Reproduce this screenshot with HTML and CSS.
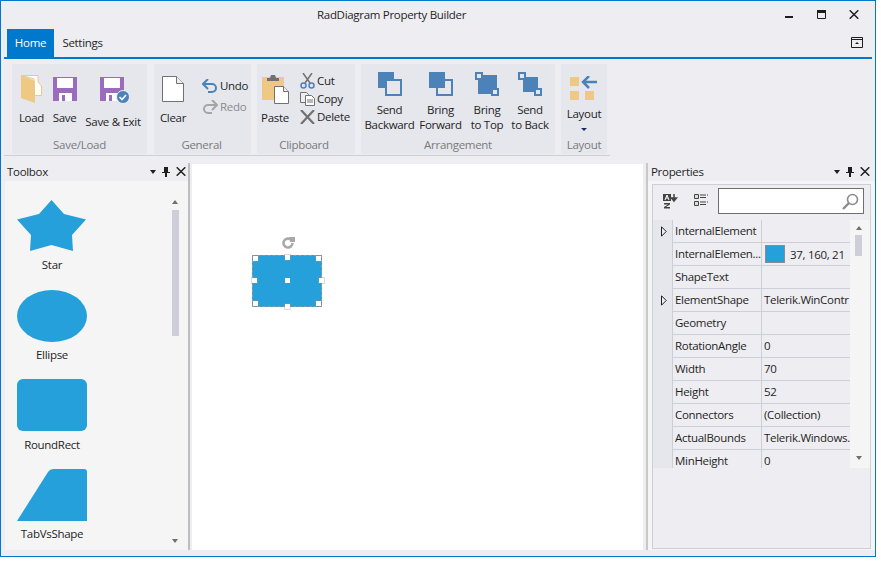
FILE: index.html
```html
<!DOCTYPE html>
<html lang="en">
<head>
<meta charset="utf-8">
<title>RadDiagram Property Builder</title>
<link rel="stylesheet" href="styles.css">
</head>
<body>
<div class="window">
  <header class="titlebar">
    <span class="title">RadDiagram Property Builder</span>
    <div class="winctrls">
      <svg width="9" height="9" viewBox="0 0 9 9"><rect x="0" y="6" width="8" height="2" fill="#1e1e1e"/></svg>
      <svg width="9" height="9" viewBox="0 0 9 9"><path d="M.5 .5h8v8h-8z" fill="none" stroke="#1e1e1e"/><rect width="9" height="3" fill="#1e1e1e"/></svg>
      <svg width="10" height="9" viewBox="0 0 10 9"><path d="M.7 .3l8.600 8.400M9.300 .3L.7 8.700" stroke="#1e1e1e" stroke-width="1.500"/></svg>
    </div>
  </header>
  <nav class="tabs">
    <span class="tab active">Home</span>
    <span class="tab">Settings</span>
    <svg class="collapse" width="12" height="11" viewBox="0 0 12 11"><path d="M.5 .5h11v10H.5z" fill="none" stroke="#1e1e1e"/><path d="M0 2.500h12" stroke="#1e1e1e"/><path d="M4 7l2-2 2 2z" fill="#1e1e1e"/></svg>
  </nav>
  <div class="ribbon">
    <section class="group g-save">
      <div class="group-body">
        <div class="btn w33">
          <svg class="ico" width="22" height="30" viewBox="0 0 22 30"><path d="M1 1.500H17V8L20.500 12V21.500H13V5z" fill="#fff" stroke="#efc884"/><path d="M0 1L14 7V29L0 24z" fill="#efc884"/></svg>
          <span class="lbl">Load</span>
        </div>
        <div class="btn w33">
          <svg class="ico" width="24" height="30" viewBox="0 0 24 30"><path d="M0 3h24v24H0z" fill="#9b6bbd"/><path d="M4 4h16v10H4z" fill="#fff"/><path d="M6 19h13v8H6z" fill="#fff"/><path d="M9 21h3v6H9z" fill="#9b6bbd"/></svg>
          <span class="lbl">Save</span>
        </div>
        <div class="btn w62">
          <svg class="ico ico-exit" width="30" height="30" viewBox="0 0 30 30"><path d="M0 3h24v24H0z" fill="#9b6bbd"/><path d="M4 4h16v10H4z" fill="#fff"/><path d="M6 19h13v8H6z" fill="#fff"/><path d="M9 21h3v6H9z" fill="#9b6bbd"/><circle cx="23" cy="23" r="6.500" fill="#4d82b8" stroke="#eeeef2"/><path d="M19.500 23l2.500 2.500 4-4.500" fill="none" stroke="#fff" stroke-width="1.600"/></svg>
          <span class="lbl low">Save &amp; Exit</span>
        </div>
      </div>
      <div class="group-name">Save/Load</div>
    </section>
    <section class="group g-general">
      <div class="group-body">
        <div class="btn w36">
          <svg class="ico" width="22" height="30" viewBox="0 0 22 30"><path d="M.5 2.500h14l7 7v18H.5z" fill="#fff" stroke="#717171"/><path d="M14.500 2.500v7h7" fill="#eee" stroke="#717171"/></svg>
          <span class="lbl">Clear</span>
        </div>
        <div class="small-stack s-general">
          <div class="small"><svg width="16" height="14" viewBox="0 0 16 14"><path d="M1 5h9a4 4 0 0 1 0 8H6" fill="none" stroke="#4d82b8" stroke-width="2"/><path d="M6 0L1 5l5 5" fill="none" stroke="#4d82b8" stroke-width="2"/></svg><span>Undo</span></div>
          <div class="small off"><svg width="16" height="14" viewBox="0 0 16 14"><path d="M15 5H6a4 4 0 0 0 0 8h4" fill="none" stroke="#a5a5a5" stroke-width="2"/><path d="M10 0l5 5-5 5" fill="none" stroke="#a5a5a5" stroke-width="2"/></svg><span>Redo</span></div>
        </div>
      </div>
      <div class="group-name">General</div>
    </section>
    <section class="group g-clip">
      <div class="group-body">
        <div class="btn w36">
          <svg class="ico" width="27" height="30" viewBox="0 0 27 30"><path d="M0 3h22v23H0z" fill="#efc884"/><path d="M5 4h3l1-3h4l1 3h3v3H5z" fill="#717171"/><path d="M12.500 12.500h9l5 5v12h-14z" fill="#fff" stroke="#717171"/><path d="M21.500 12.500v5h5" fill="#eee" stroke="#717171"/></svg>
          <span class="lbl">Paste</span>
        </div>
        <div class="small-stack s-clip">
          <div class="small"><svg width="15" height="16" viewBox="0 0 15 16"><path d="M3 0l7 10M12 0L5 10" stroke="#717171" stroke-width="1.500"/><circle cx="3.500" cy="12.500" r="2.500" fill="none" stroke="#4d82b8" stroke-width="1.500"/><circle cx="11.500" cy="12.500" r="2.500" fill="none" stroke="#4d82b8" stroke-width="1.500"/></svg><span>Cut</span></div>
          <div class="small"><svg width="15" height="14" viewBox="0 0 15 14"><path d="M.5 .5h6l2 2v8H.5z" fill="#eee" stroke="#717171"/><path d="M5.500 3.500h6l3 3v7h-9z" fill="#fff" stroke="#717171"/><path d="M7 8h6M7 10h6" stroke="#717171"/></svg><span>Copy</span></div>
          <div class="small"><svg width="15" height="14" viewBox="0 0 15 14"><path d="M1 0l13 14M14 0L1 14" stroke="#717171" stroke-width="2.200"/></svg><span>Delete</span></div>
        </div>
      </div>
      <div class="group-name">Clipboard</div>
    </section>
    <section class="group g-arr">
      <div class="group-body arr-body">
        <div class="btn w51">
          <svg class="ico" width="24" height="24" viewBox="0 0 24 24"><path d="M0 0h16v16H0z" fill="#4d82b8"/><path d="M8 8h15v15H8z" fill="#e6e7ed" stroke="#4d82b8" stroke-width="2"/></svg>
          <span class="lbl two">Send<br>Backward</span>
        </div>
        <div class="btn w51">
          <svg class="ico" width="24" height="24" viewBox="0 0 24 24"><path d="M8 8h15v15H8z" fill="none" stroke="#4d82b8" stroke-width="2"/><path d="M0 0h16v16H0z" fill="#4d82b8"/></svg>
          <span class="lbl two">Bring<br>Forward</span>
        </div>
        <div class="btn w44">
          <svg class="ico" width="24" height="24" viewBox="0 0 24 24"><path d="M3 3h19v19H3z" fill="#4d82b8"/><path d="M1 1h6v6H1zM17 17h6v6h-6z" fill="#e6e7ed" stroke="#4d82b8" stroke-width="2"/></svg>
          <span class="lbl two">Bring<br>to Top</span>
        </div>
        <div class="btn w42">
          <svg class="ico" width="24" height="24" viewBox="0 0 24 24"><path d="M5 5h15v15H5z" fill="#4d82b8"/><path d="M1 1h6v6H1zM17 17h6v6h-6z" fill="#e6e7ed" stroke="#4d82b8" stroke-width="2"/></svg>
          <span class="lbl two">Send<br>to Back</span>
        </div>
      </div>
      <div class="group-name">Arrangement</div>
    </section>
    <section class="group g-layout">
      <div class="group-body">
        <div class="btn w46 btn-layout">
          <svg class="ico" width="28" height="24" viewBox="0 0 28 24"><path d="M0 1h9v9H0zM0 15h9v9H0zM15 15h9v9h-9z" fill="#efc884"/><path d="M27 6H13M19 0l-6 6 6 6" fill="none" stroke="#4d82b8" stroke-width="2.500"/></svg>
          <span class="lbl">Layout</span>
          <i class="caret"></i>
        </div>
      </div>
      <div class="group-name">Layout</div>
    </section>
  </div>
  <main class="dock">
    <aside class="toolbox">
      <div class="pane-head"><span>Toolbox</span>
        <div class="pane-ctrls">
          <i class="tri"></i>
          <svg width="8" height="10" viewBox="0 0 8 10"><path d="M2 0h4v5h2v1H5v4H3V6H0V5h2z" fill="#1e1e1e"/></svg>
          <svg width="10" height="9" viewBox="0 0 10 9"><path d="M.7 .3l8.600 8.400M9.300 .3L.7 8.700" stroke="#1e1e1e" stroke-width="1.500"/></svg>
        </div>
      </div>
      <div class="toolbox-body">
        <div class="shapes">
          <figure class="shape"><svg width="70" height="52" viewBox="0 0 70 52"><path d="M34.500 0L47 14 69 19.500 55 35 56 51 34.500 45 13 51 14 35 0 19.500 22 14z" fill="#25a0da"/></svg><figcaption>Star</figcaption></figure>
          <figure class="shape"><svg width="70" height="52" viewBox="0 0 70 52"><ellipse cx="35" cy="26" rx="35" ry="26" fill="#25a0da"/></svg><figcaption>Ellipse</figcaption></figure>
          <figure class="shape"><svg width="70" height="52" viewBox="0 0 70 52"><rect width="70" height="52" rx="6" fill="#25a0da"/></svg><figcaption>RoundRect</figcaption></figure>
          <figure class="shape"><svg width="70" height="52" viewBox="0 0 70 52"><path d="M0 52L31 3Q33 0 37 0H67Q70 0 70 3V52z" fill="#25a0da"/></svg><figcaption>TabVsShape</figcaption></figure>
        </div>
        <div class="vscroll">
          <i class="up"></i><b class="thumb"></b><i class="down"></i>
        </div>
      </div>
    </aside>
    <div class="splitter"></div>
    <section class="canvas">
      <svg class="rotate" width="13" height="12" viewBox="0 0 13 12"><path d="M10.500 6a4.500 4.500 0 1 1-2-3.700" fill="none" stroke="#a8a8a8" stroke-width="2.500"/><path d="M7 0h6v5H8z" fill="#a8a8a8"/></svg>
      <div class="node">
        <i class="h tl"></i><i class="h tc"></i><i class="h tr"></i>
        <i class="h ml"></i><i class="h mc"></i><i class="h mr"></i>
        <i class="h bl"></i><i class="h bc"></i><i class="h br"></i>
      </div>
    </section>
    <div class="splitter2"></div>
    <aside class="props">
      <div class="pane-head phead"><span>Properties</span>
        <div class="pane-ctrls">
          <i class="tri"></i>
          <svg width="8" height="10" viewBox="0 0 8 10"><path d="M2 0h4v5h2v1H5v4H3V6H0V5h2z" fill="#1e1e1e"/></svg>
          <svg width="10" height="9" viewBox="0 0 10 9"><path d="M.7 .3l8.600 8.400M9.300 .3L.7 8.700" stroke="#1e1e1e" stroke-width="1.500"/></svg>
        </div>
      </div>
      <div class="props-body">
        <div class="props-frame">
          <div class="props-tools">
            <svg width="15" height="15" viewBox="0 0 15 15"><rect x="0" y="0" width="8" height="7" fill="#444"/><path d="M2 6l2-5 2 5M3 4h2" fill="none" stroke="#fff"/><path d="M1 9h6v1.500L3 13h4v1.500H1V13l4-2.500H1z" fill="#444"/><path d="M11 0v6M8.500 4l2.500 3 2.500-3z" stroke="#444" fill="#444" stroke-width="1.500"/></svg>
            <svg width="14" height="12" viewBox="0 0 14 12"><path d="M.5 .5h4v4h-4zM.5 7.500h4v4h-4z" fill="#ddd" stroke="#444"/><path d="M6 1h6M6 3.500h6M6 8h6M6 10.500h6M13 1h1M13 8h1" stroke="#444"/></svg>
            <div class="search"><svg width="17" height="17" viewBox="0 0 17 17"><circle cx="10.500" cy="6.500" r="5" fill="none" stroke="#8c8c8c" stroke-width="1.600"/><path d="M7 10l-6 6" stroke="#8c8c8c" stroke-width="2.400"/></svg></div>
          </div>
          <div class="grid-wrap">
            <div class="grid">
              <div class="row"><span class="gut"><svg width="6" height="11" viewBox="0 0 6 11"><path d="M.5 .8L5.200 5.500.5 10.200z" fill="#eeeef2" stroke="#1e1e1e"/></svg></span><span class="k">InternalElement</span><span class="v"></span></div>
              <div class="row"><span class="gut"></span><span class="k">InternalElemen...</span><span class="v color"><i class="swatch"></i>37, 160, 21</span></div>
              <div class="row"><span class="gut"></span><span class="k">ShapeText</span><span class="v"></span></div>
              <div class="row"><span class="gut"><svg width="6" height="11" viewBox="0 0 6 11"><path d="M.5 .8L5.200 5.500.5 10.200z" fill="#eeeef2" stroke="#1e1e1e"/></svg></span><span class="k">ElementShape</span><span class="v">Telerik.WinContr</span></div>
              <div class="row"><span class="gut"></span><span class="k">Geometry</span><span class="v"></span></div>
              <div class="row"><span class="gut"></span><span class="k">RotationAngle</span><span class="v">0</span></div>
              <div class="row"><span class="gut"></span><span class="k">Width</span><span class="v">70</span></div>
              <div class="row"><span class="gut"></span><span class="k">Height</span><span class="v">52</span></div>
              <div class="row"><span class="gut"></span><span class="k">Connectors</span><span class="v">(Collection)</span></div>
              <div class="row"><span class="gut"></span><span class="k">ActualBounds</span><span class="v">Telerik.Windows.</span></div>
              <div class="row"><span class="gut"></span><span class="k">MinHeight</span><span class="v">0</span></div>
            </div>
            <div class="vscroll vs2">
              <i class="up"></i><b class="thumb"></b><i class="down"></i>
            </div>
          </div>
        </div>
      </div>
    </aside>
  </main>
</div>
</body>
</html>
```

FILE: styles.css
```css
* { box-sizing: border-box; }
html, body { margin: 0; padding: 0; background: #fff; }
body { font: 11.5px/16px "Open Sans", "Noto Sans", sans-serif; color: #1e1e1e; letter-spacing: -0.3px; }
figure { margin: 0; }
i { display: block; }

.window {
  width: 876px; height: 557px;
  border: 1px solid #0078cc;
  background: #eeeef2;
  display: flex; flex-direction: column;
  overflow: hidden;
}

.titlebar { height: 28px; display: flex; align-items: center; padding-left: 316px; flex: none; }
.winctrls { margin-left: auto; margin-right: 16px; display: flex; gap: 23px; margin-bottom: 2px; }

.tabs { height: 30px; margin: 0 3px; border-bottom: 2px solid #0078cc; display: flex; align-items: stretch; padding-left: 3px; flex: none; }
.tab { width: 47px; height: 28px; line-height: 27px; text-align: center; }
.tab + .tab { width: 57px; }
.tab.active { background: #0078cc; color: #fff; }
.collapse { margin-left: auto; margin-right: 9px; margin-top: 8px; }

.ribbon {
  width: 606px; height: 92px; margin: 5px 0 0 3px; padding: 0 0 0 8px;
  border-bottom: 1px solid #ccced8;
  display: flex; gap: 6px; flex: none;
}
.group { background: #e6e7ed; height: 90px; display: flex; flex-direction: column; flex: none; }
.g-save { width: 135px; padding-left: 3px; margin-right: 1px; }
.g-general { width: 97px; padding-left: 1px; }
.g-clip { width: 98px; }
.g-arr { width: 194px; padding-left: 3px; }
.g-layout { width: 46px; }
.group-body { height: 74px; display: flex; }
.group-name { height: 16px; line-height: 13px; text-align: center; color: #7a7a7a; padding-right: 3px; }
.g-clip .group-name { padding-right: 4px; }
.g-layout .group-name { padding-right: 0; }

.btn { display: flex; flex-direction: column; align-items: center; padding-top: 10px; white-space: nowrap; text-align: center; }
.ico { display: block; flex: none; }
.ico-exit { margin-left: 3px; }
.w33 { width: 33px; }
.w62 { width: 62px; margin-left: 1px; }
.w36 { width: 36px; }
.w51 { width: 51px; }
.w44 { width: 44px; margin-left: -1px; }
.w42 { width: 42px; }
.w46 { width: 46px; }
.lbl { margin-top: 6px; }
.lbl.low { margin-top: 10px; }
.lbl.two { margin-top: 6px; line-height: 15px; }
.arr-body .btn { padding-top: 8px; }
.btn-layout { padding-top: 12px; }
.caret { width: 0; height: 0; border: 3px solid transparent; border-top: 3px solid #1e2a60; margin-top: 6px; }

.small-stack { display: flex; flex-direction: column; }
.s-general { padding: 14px 0 0 11px; gap: 5px; }
.s-clip { padding: 9px 0 0 7px; gap: 2px; }
.small { height: 16px; display: flex; align-items: center; gap: 2px; white-space: nowrap; }
.off { color: #8a8a8a; }

.dock { flex: 1; display: flex; margin-top: 7px; min-height: 0; }
.toolbox { width: 187px; display: flex; flex-direction: column; height: 387px; flex: none; }
.pane-head { height: 18px; padding: 0 0 1px 6px; line-height: 15px; display: flex; align-items: center; flex: none; }
.pane-ctrls { margin-left: auto; display: flex; align-items: center; gap: 6px; margin-right: 2px; }
.tri { width: 0; height: 0; border: 3.5px solid transparent; border-top: 4px solid #1e1e1e; border-bottom: 0; }
.toolbox-body { flex: 1; margin-left: 4px; background: #f5f5f5; display: flex; min-height: 0; padding: 19px 0 0 12px; }
.shapes { width: 154px; display: flex; flex-direction: column; gap: 16.700px; flex: none; }
.shape { width: 70px; height: 73px; display: flex; flex-direction: column; align-items: center; }
.shape svg { display: block; flex: none; }
.shape figcaption { margin-top: 5.400px; white-space: nowrap; }

.vscroll { width: 8px; display: flex; flex-direction: column; align-items: center; height: 343px; flex: none; }
.up { width: 0; height: 0; border: 3.5px solid transparent; border-bottom: 4px solid #6f6f6f; border-top: 0; flex: none; }
.down { width: 0; height: 0; border: 3.5px solid transparent; border-top: 4px solid #6f6f6f; border-bottom: 0; margin-top: auto; flex: none; }
.thumb { display: block; width: 7px; height: 126px; margin-top: 6px; background: #cdced8; flex: none; }

.splitter { width: 2px; height: 387px; background: #bdbdbd; flex: none; }
.canvas { width: 451px; height: 386px; margin: 1px 3px 0 2px; background: #fff; position: relative; flex: none; }
.rotate { position: absolute; left: 90px; top: 73px; }
.node { position: absolute; left: 60px; top: 91px; width: 70px; height: 52px; background: #25a0da; border: 1px dashed #8f9aa3; }
.h { position: absolute; width: 5px; height: 5px; background: #fff; box-shadow: 0 0 0 1px rgba(150,150,150,.35); }
.tl { left: 0; top: 0; }
.tc { left: 32px; top: -1px; }
.tr { right: 0; top: 0; }
.ml { left: -1px; top: 22px; }
.mc { left: 32px; top: 22px; box-shadow: none; }
.mr { right: -3px; top: 22px; }
.bl { left: 0; bottom: 0; }
.bc { left: 32px; bottom: -3px; }
.br { right: 0; bottom: 0; }

.splitter2 { width: 2px; height: 387px; background: #c8c8c8; flex: none; }
.props { flex: 1; display: flex; flex-direction: column; min-width: 0; height: 387px; }
.phead { padding-left: 3px; }
.phead .pane-ctrls { margin-right: 5px; }
.props-body { flex: 1; background: #f5f5f5; padding: 3px 4px 1px 4px; min-height: 0; }
.props-frame { height: 100%; border: 1px solid #ccced8; background: #eeeef2; }
.props-tools { height: 35px; display: flex; align-items: flex-start; padding: 3px 3px 0 10px; }
.props-tools svg { margin-top: 6px; }
.props-tools > svg + svg { margin-left: 16px; }
.search { width: 146px; height: 26px; margin-left: 10px; background: #fff; border: 1px solid #6f6f6f; display: flex; justify-content: flex-end; padding-right: 4px; }
.search svg { margin-top: 4px; }

.grid-wrap { height: 248px; display: flex; overflow: hidden; background: #f5f5f5; }
.grid { width: 197px; flex: none; }
.row { display: flex; height: 23px; }
.gut { width: 19px; background: #e6e7ed; display: flex; align-items: center; padding-left: 8px; flex: none; }
.k, .v { border-left: 1px solid #ccced8; border-bottom: 1px solid #ccced8; background: #eeeef2; padding-left: 2px; line-height: 21px; white-space: nowrap; overflow: hidden; width: 89px; flex: none; }
.color { display: flex; align-items: center; padding-left: 3px; gap: 5px; }
.swatch { width: 20px; height: 18px; background: #25a0da; border: 1px solid #8c8c8c; flex: none; }
.vs2 { width: 17px; height: 240px; padding-top: 6px; }
.vs2 .thumb { height: 21px; margin-top: 5px; }
```
